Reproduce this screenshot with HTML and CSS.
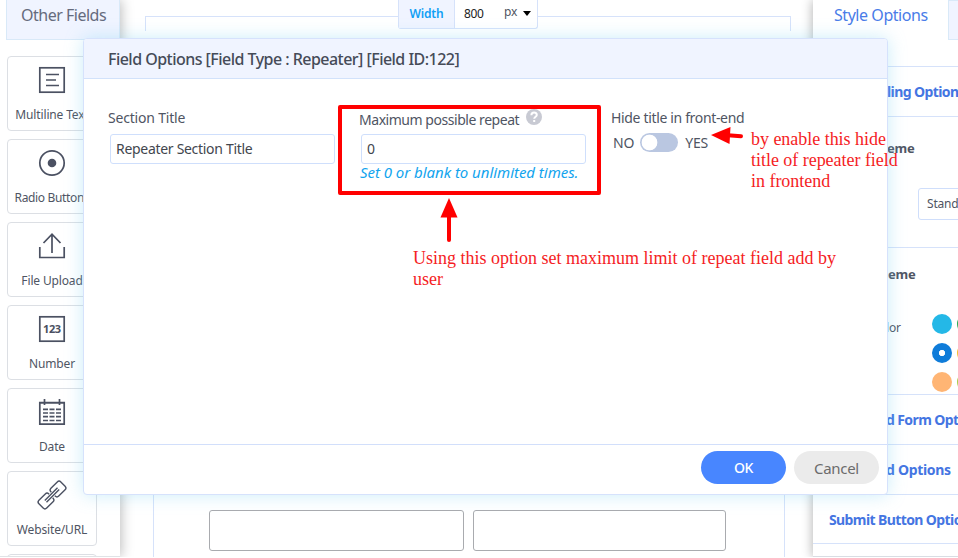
FILE: index.html
```html
<!DOCTYPE html>
<html lang="en">
<head>
<meta charset="utf-8">
<title>Field Options</title>
<link rel="stylesheet" href="styles.css">
</head>
<body>
<div class="app">
  <aside class="fields">
    <div class="fields-tab"><span>Other Fields</span></div>
    <div class="field-list">
      <div class="card">
        <svg viewBox="0 0 28 28"><rect x="1.8" y="1.8" width="24.4" height="24.4"/><path d="M8 8.5h13M8 14h10M8 19.5h13"/></svg>
        <span>Multiline Text</span>
      </div>
      <div class="card">
        <svg viewBox="0 0 28 28"><circle cx="14" cy="14" r="12.2"/><circle class="solid" cx="14" cy="14" r="4.3"/></svg>
        <span class="tight">Radio Buttons</span>
      </div>
      <div class="card">
        <svg viewBox="0 0 28 28"><path d="M1.8 15v10.5h24.4V15M14 21V2M5.5 11L14 2.2 22.5 11"/></svg>
        <span>File Upload</span>
      </div>
      <div class="card">
        <svg viewBox="0 0 28 28"><rect x="1.8" y="1.8" width="24.4" height="24.4"/><text x="14" y="18" textLength="18">123</text></svg>
        <span>Number</span>
      </div>
      <div class="card">
        <svg viewBox="0 0 28 28"><path d="M1.8 4.5h24.4v21.7H1.8zM1 5h26M6.5 1v6M21.5 1v6"/><path d="M5 11.3h18M5 15h18M5 18.7h18M5 22.5h18" stroke-dasharray="5 1.5"/></svg>
        <span>Date</span>
      </div>
      <div class="card">
        <svg viewBox="0 0 28 28"><g transform="rotate(-45 14 14)" class="thin"><path d="M12.500 11.500V11a2.500 2.500 0 0 0-2.500-2.500H1A2.500 2.500 0 0 0-1.500 11v6A2.500 2.500 0 0 0 1 19.500h9a2.500 2.500 0 0 0 2.500-2.500v-.5M15.500 11.500V11A2.500 2.500 0 0 1 18 8.500h9a2.500 2.500 0 0 1 2.500 2.500v6a2.500 2.500 0 0 1-2.500 2.500h-9a2.500 2.500 0 0 1-2.500-2.500v-.5"/><path d="M5 12.800h18M5 15.200h18"/></g></svg>
        <span>Website/URL</span>
      </div>
      <div class="card"></div>
    </div>
  </aside>
  <main class="canvas">
    <div class="frame-top"></div>
    <div class="width-bar"><b>Width</b><span class="num">800</span><span class="unit">px</span><i></i></div>
    <div class="form-id">(Form ID: 102)</div>
    <div class="form-area"><div class="box"></div><div class="box box2"></div></div>
  </main>
  <aside class="style-panel">
    <div class="tabs"><div class="tab-on"><span>Style Options</span></div><div class="tab-off"></div></div>
    <div class="row first"><span>ling Options</span></div>
    <div class="group theme">
      <strong>eme</strong>
      <div class="select"><span>Standard</span></div>
    </div>
    <div class="group colors">
      <strong class="shifted">eme</strong>
      <div class="palette">
        <span class="color-label">lor</span>
        <div class="dots">
          <i class="cyan"></i><i class="green"></i>
          <i class="blue"></i><i class="yellow"></i>
          <i class="orange"></i><i class="lime"></i>
        </div>
      </div>
    </div>
    <div class="row"><span class="inset">d Form Options</span></div>
    <div class="row"><span class="inset wide">d Options</span></div>
    <div class="row last"><span>Submit Button Options</span></div>
  </aside>
</div>

<section class="modal">
  <header><span>Field Options [Field Type : Repeater] [Field ID:122]</span></header>
  <div class="modal-body">
    <div class="col c1">
      <label><span class="t-section">Section Title</span></label>
      <div class="input"><span class="t-value">Repeater Section Title</span></div>
    </div>
    <div class="col c2">
      <label class="low"><span class="t-max">Maximum possible repeat</span><svg class="help" viewBox="0 0 16 16"><circle cx="8" cy="8" r="8"/><path d="M5.400 6.200c0-3.600 5.400-3.400 5.400-.3 0 1.800-2.600 1.800-2.600 3.900M8.200 11v2"/></svg></label>
      <div class="input"><span>0</span></div>
      <em class="t-hint">Set 0 or blank to unlimited times.</em>
    </div>
    <div class="col c3">
      <label><span class="t-hide">Hide title in front-end</span></label>
      <div class="switch-row"><span>NO</span><span class="switch"></span><span>YES</span></div>
    </div>
  </div>
  <footer><button class="ok">OK</button><button class="cancel">Cancel</button></footer>
</section>

<div class="mark-box"></div>
<svg class="arrow-up" viewBox="0 0 20 50"><path d="M9 1l8.500 19.500H.5z"/><path class="shaft" d="M9 18v25"/></svg>
<svg class="arrow-left" viewBox="0 0 34 18"><path d="M0 8L19.500 0l-1 17z"/><path class="shaft" d="M17 8.200l13 1"/></svg>
<p class="note note-repeat">Using this option set maximum limit of repeat field add by<br>user</p>
<p class="note note-hide">by enable this hide<br>title of repeater field<br>in frontend</p>
</body>
</html>
```
FILE: styles.css
```css
* { box-sizing: border-box; }
html, body { margin: 0; height: 558px; overflow: hidden; }
body {
  position: relative;
  width: 958px;
  background: #fff;
  color: #4f5563;
  font-family: "Noto Sans", "Open Sans", sans-serif;
  font-size: 14px;
  letter-spacing: -.2px;
  white-space: nowrap;
}
.app { display: grid; grid-template-columns: 120px 693px 145px; height: 557px; overflow: hidden; }

.fields { background: #fff; height: 557px; overflow: hidden; border-bottom: 1px solid #e0e3e6; box-shadow: 1px 0 12px rgba(0,0,0,.28); }
.fields-tab { margin-left: 6px; height: 40px; background: #f0f4ff; border: 1px solid #d9e9f8; border-top: 0; padding: 4px 0 0 14px; font-size: 16px; line-height: 22px; letter-spacing: -.5px; color: #656b7d; }
.field-list { display: flex; flex-direction: column; gap: 8px; padding: 16px 0 0 7px; }
.card { flex: none; width: 90px; height: 75px; border: 1px solid #dcdfe4; border-radius: 4px; display: flex; flex-direction: column; align-items: center; padding-top: 9px; font-size: 12px; letter-spacing: -.15px; }
.card svg { width: 28px; height: 28px; fill: none; stroke: #4b5162; stroke-width: 1.7; overflow: visible; }
.card svg .solid { fill: #4b5162; stroke: none; }
.card svg text { fill: #4b5162; stroke: none; font-size: 11px; font-weight: 700; text-anchor: middle; }
.card svg .thin { stroke-width: 1.4; }
.card > span { margin-top: 12px; line-height: 18px; }
.card > .tight { letter-spacing: -.35px; }

.canvas { display: flex; flex-direction: column; position: relative; z-index: -1; }
.frame-top { flex: none; margin: 16px 22px 0 25px; height: 15px; border: 1px solid #d6e2fa; border-bottom: 0; }
.width-bar { position: absolute; left: 278px; top: 0; width: 140px; height: 29px; display: flex; background: #fff; border: 1px solid #d6e2fa; border-top: 0; font-size: 12px; line-height: 27px; border-radius: 0 0 3px 3px; }
.width-bar b { width: 56px; text-align: center; background: #f0f4ff; color: #10a0f5; border-right: 1px solid #d6e2fa; font-weight: 600; }
.width-bar .num { margin-left: 9px; width: 40px; color: #222; letter-spacing: -.4px; }
.width-bar .unit { line-height: 24px; width: 19px; }
.width-bar i { border: 4px solid transparent; border-top: 5px solid #000; border-bottom: 0; height: 5px; margin-top: 11px; }
.form-id { margin: 3px 0 0 305px; height: 17px; line-height: 17px; font-size: 13px; color: #8c92a0; }
.form-area { flex: none; margin: 0 28px 0 33px; height: 510px; border: 1px solid #d6e2fa; display: flex; gap: 9px; padding: 458px 0 0 55px; }
.box { width: 255px; height: 41px; border: 1px solid #a9abaf; border-radius: 3px; flex: none; }
.box2 { width: 253px; }

.style-panel { background: #fff; height: 557px; overflow: hidden; border-bottom: 1px solid #d9dde3; box-shadow: -1px 0 10px rgba(0,0,0,.28); }
.tabs { display: flex; height: 66px; font-size: 16px; letter-spacing: -.45px; }
.tab-on { width: 135px; padding: 4px 0 0 21px; line-height: 22px; color: #4a7ce8; flex: none; }
.tab-off { width: 40px; height: 40px; flex: none; background: #f0f4ff; border: 1px solid #d9e9f8; }
.row { height: 50px; border-top: 1px solid #d6e2fa; line-height: 50px; font-weight: 700; letter-spacing: -.6px; color: #4475e2; padding-left: 16px; }
.row.first { height: 51px; border-bottom: 1px solid #d6e2fa; padding-left: 74px; }
.row .inset { margin-left: 57px; }
.row .wide { letter-spacing: -.3px; }
.row.last { border-bottom: 1px solid #d6e2fa; }
.group strong { display: block; line-height: 20px; padding-left: 74px; font-size: 13px; }
.group .shifted { padding-left: 75px; }
.theme { height: 130px; padding-top: 21px; }
.select { margin: 30px 0 0 105px; width: 120px; height: 32px; border: 1px solid #cfdefb; border-radius: 3px; padding-left: 8px; line-height: 30px; font-size: 12px; }
.colors { height: 147px; border-top: 1px solid #d6e2fa; padding-top: 16px; }
.palette { display: flex; padding: 30px 0 0 73px; font-size: 12px; }
.color-label { flex: none; width: 46px; line-height: 28px; }
.dots { flex: none; display: grid; grid-template-columns: 20px 20px; gap: 9px 5px; }
.dots i { width: 20px; height: 20px; border-radius: 50%; }
.cyan { background: #24b8e7; }
.green { background: #2aa952; }
.blue { background: radial-gradient(circle, #fff 0 2.8px, #0f7cd9 3.5px); }
.yellow { background: #f5bf2e; }
.orange { background: #ffb574; }
.lime { background: #a9cf48; }

.modal { position: absolute; left: 83px; top: 38px; width: 805px; height: 457px; background: #fff; border: 1px solid #d6e2fc; border-radius: 4px; box-shadow: 0 0 18px rgba(110,205,240,.36); display: flex; flex-direction: column; }
.modal header { height: 40px; background: #f0f4ff; border-bottom: 1px solid #d2e2fb; border-radius: 3px 3px 0 0; padding-left: 24px; line-height: 41px; font-size: 16px; font-weight: 500; letter-spacing: -.53px; color: #454b58; }
.modal-body { height: 366px; border-bottom: 1px solid #d2dffb; display: flex; padding: 29px 0 0 24px; }
.col label { display: flex; height: 26px; line-height: 20px; }
.col label.low { padding-top: 2px; }
.c1, .c2 { width: 251px; }
.c1 .input, .c2 .input { margin-left: 2px; }
.c3 { margin-left: 1px; }
.input { width: 225px; height: 30px; border: 1px solid #cfdffc; border-radius: 3px; padding-left: 5px; line-height: 27px; color: #42464e; }
.t-value { letter-spacing: -.3px; }
.t-max { letter-spacing: -.46px; }
.t-hide { letter-spacing: -.34px; }
.help { width: 16px; height: 16px; margin: -1px 0 0 7px; fill: #c8cad3; }
.help path { fill: none; stroke: #fff; stroke-width: 2; }
.t-hint { display: block; margin-top: -1px; padding-left: 1px; color: #12a4ee; font-size: 15px; line-height: 18px; letter-spacing: -.04px; }
.switch-row { display: flex; align-items: center; height: 20px; margin: -2px 0 0 2px; }
.switch { width: 38px; height: 19px; margin: 0 7px 0 6px; border-radius: 10px; background: radial-gradient(circle at 9.5px 9.5px, #fff 7.5px, #bac7e1 8.2px); }
.modal footer { flex: 1; display: flex; justify-content: flex-end; gap: 8px; padding: 6px 8px 0 0; }
button { width: 85px; height: 33px; border: 0; border-radius: 17px; padding: 0; font: inherit; font-size: 15px; letter-spacing: -.3px; }
.ok { background: #4886ff; color: #fff; font-size: 14px; font-weight: 500; }
.cancel { background: #ebebeb; color: #6c6c6c; }

.mark-box { position: absolute; left: 338px; top: 105px; width: 263px; height: 90px; border: 4px solid #f00; border-radius: 2px; }
.arrow-up, .arrow-left { position: absolute; fill: #f00; }
.arrow-up { left: 440px; top: 197px; width: 20px; height: 50px; }
.arrow-left { left: 711px; top: 127px; width: 34px; height: 18px; }
.shaft { stroke: #f00; stroke-width: 4; stroke-linecap: round; }
.note { position: absolute; margin: 0; font-family: "Liberation Serif", serif; font-size: 18px; line-height: 21px; letter-spacing: 0; color: #f51d24; }
.note-repeat { left: 413px; top: 248px; line-height: 21px; }
.note-hide { left: 751px; top: 129px; letter-spacing: -.03px; }
```
